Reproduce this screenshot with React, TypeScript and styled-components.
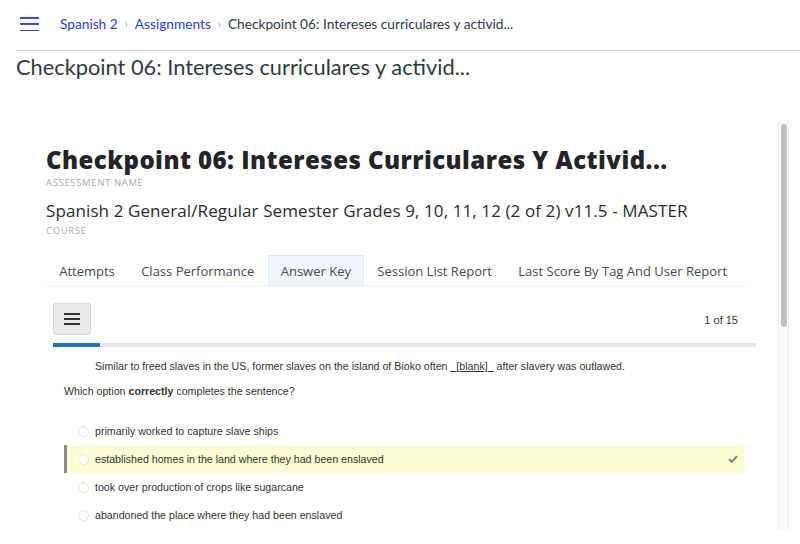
import React from "react";
import styled, { createGlobalStyle } from "styled-components";

const Global = createGlobalStyle`
  html, body { margin: 0; padding: 0; background: #fff; }
  body { font-family: Lato, "Noto Sans", sans-serif; color: #2d3b45; overflow: hidden; }
  * { box-sizing: border-box; }
`;

const Page = styled.div`
  width: 800px;
  height: 544px;
  overflow: hidden;
`;

const Header = styled.header`
  height: 50px;
  display: flex;
  align-items: center;
  padding-left: 20px;
  gap: 21px;
`;

const MenuButton = styled.button`
  border: 0;
  background: none;
  padding: 0;
  width: 19px;
  height: 14px;
  display: flex;
  flex-direction: column;
  justify-content: space-between;
  margin-top: -2px;
`;

const MenuLine = styled.span`
  display: block;
  height: 1.5px;
  width: 19px;
  background: #3b4bd6;
`;

const Crumbs = styled.nav`
  display: flex;
  align-items: center;
  font-size: 13.7px;
  margin-top: -3px;
`;

const CrumbLink = styled.a`
  color: #2b3fd0;
  text-decoration: none;
`;

const CrumbSep = styled.span`
  color: #8b969e;
  font-size: 11px;
  margin: 0 7px;
`;

const CrumbCurrent = styled.span`
  color: #2d3b45;
`;

const Divider = styled.hr`
  margin: 0 0 0 16px;
  border: 0;
  border-top: 1px solid #c7cdd1;
`;

const PageTitle = styled.h1`
  margin: 0;
  padding: 1px 0 0 16px;
  font-size: 21.8px;
  font-weight: 400;
  line-height: 30px;
  color: #2d3b45;
`;

const Frame = styled.div`
  margin: 40px 0 0 16px;
  width: 773px;
  height: 408px;
  display: flex;
  overflow: hidden;
`;

const FrameContent = styled.div`
  flex: 1;
  padding: 24px 0 0 30px;
`;

const ScrollTrack = styled.div`
  width: 11px;
  height: 408px;
  background: #fafafa;
  border-left: 1px solid #efefef;
  border-right: 1px solid #efefef;
  padding: 2px 0 0 2px;
`;

const ScrollThumb = styled.div`
  width: 6px;
  height: 203px;
  border-radius: 3px;
  background: #c1c1c1;
`;

const AssessmentTitle = styled.h2`
  margin: 0;
  font-family: "Open Sans", sans-serif;
  font-weight: 800;
  font-size: 24px;
  line-height: 28px;
  letter-spacing: 0.45px;
  color: #222427;
`;

const FieldLabel = styled.div`
  margin-top: 3px;
  font-family: "Open Sans", sans-serif;
  font-size: 9.5px;
  line-height: 11px;
  color: #a9abae;
  letter-spacing: 0.65px;
  text-transform: uppercase;
`;

const CourseName = styled.div`
  margin-top: 12px;
  font-family: "Open Sans", sans-serif;
  font-size: 17px;
  line-height: 22px;
  letter-spacing: 0.1px;
  color: #2a2c2f;
`;

const Tabs = styled.div`
  margin-top: 19px;
  width: 701px;
  height: 32px;
  display: flex;
  border-bottom: 1px solid #f2f3f5;
`;

const Tab = styled.div<{ $active?: boolean }>`
  height: 31px;
  padding: 0 12.2px;
  display: flex;
  align-items: center;
  font-family: "Open Sans", sans-serif;
  font-size: 13px;
  color: #454a50;
  background: ${(p) => (p.$active ? "#f0f5fc" : "transparent")};
  border: 1px solid ${(p) => (p.$active ? "#e2e8f0" : "transparent")};
  border-bottom: 0;
`;

const Quiz = styled.div`
  margin: 16px 0 0 7px;
  width: 703px;
  font-family: "Liberation Sans", Arial, sans-serif;
  font-size: 10.65px;
  color: #333;
`;

const QuizBar = styled.div`
  height: 32px;
  display: flex;
  align-items: center;
  justify-content: space-between;
  padding-right: 18px;
`;

const ListButton = styled.button`
  width: 38px;
  height: 32px;
  border: 1px solid #d9d9d9;
  border-radius: 2px;
  background: #e9e9e9;
  display: flex;
  flex-direction: column;
  align-items: center;
  justify-content: center;
  gap: 3px;
  padding: 0;
`;

const ListLine = styled.span`
  display: block;
  width: 16px;
  height: 2px;
  background: #333;
`;

const Counter = styled.span`
  font-size: 11px;
  color: #333;
  margin-top: 1px;
`;

const Progress = styled.div`
  margin-top: 8px;
  height: 4px;
  background: #e6e6e6;
`;

const ProgressFill = styled.div`
  height: 4px;
  background: #1f74b8;
`;

const Stem = styled.p`
  margin: 12px 0 0 42px;
  line-height: 14px;
`;

const Blank = styled.span`
  text-decoration: underline;
  text-underline-offset: 1px;
`;

const Prompt = styled.p`
  margin: 11px 0 0 11px;
  line-height: 14px;
`;

const Options = styled.div`
  margin: 19px 0 0 11px;
  width: 680px;
  display: flex;
  flex-direction: column;
`;

const Option = styled.div<{ $correct?: boolean }>`
  height: 28px;
  display: flex;
  align-items: center;
  padding: 0 6px 0 11px;
  gap: 6px;
  background: ${(p) => (p.$correct ? "#fafdd3" : "transparent")};
  border-left: 3px solid ${(p) => (p.$correct ? "#8a8a8a" : "transparent")};
`;

const Radio = styled.span`
  width: 11px;
  height: 11px;
  border-radius: 50%;
  border: 1px solid #e2e2e2;
  background: #fff;
  flex: none;
`;

const OptionText = styled.span`
  flex: 1;
  color: #333;
`;

const Check = () => (
  <svg width="10" height="8" viewBox="0 0 10 8">
    <path d="M1 4.2 L3.8 6.8 L9 1.2" fill="none" stroke="#777" strokeWidth="1.8" />
  </svg>
);

const options = [
  { text: "primarily worked to capture slave ships", correct: false },
  { text: "established homes in the land where they had been enslaved", correct: true },
  { text: "took over production of crops like sugarcane", correct: false },
  { text: "abandoned the place where they had been enslaved", correct: false },
];

const tabs = ["Attempts", "Class Performance", "Answer Key", "Session List Report", "Last Score By Tag And User Report"];

export default function App() {
  const current = 1;
  const total = 15;
  return (
    <Page>
      <Global />
      <Header>
        <MenuButton aria-label="menu">
          <MenuLine />
          <MenuLine />
          <MenuLine />
        </MenuButton>
        <Crumbs>
          <CrumbLink href="#">Spanish 2</CrumbLink>
          <CrumbSep>›</CrumbSep>
          <CrumbLink href="#">Assignments</CrumbLink>
          <CrumbSep>›</CrumbSep>
          <CrumbCurrent>Checkpoint 06: Intereses curriculares y activid...</CrumbCurrent>
        </Crumbs>
      </Header>
      <Divider />
      <PageTitle>Checkpoint 06: Intereses curriculares y activid...</PageTitle>
      <Frame>
        <FrameContent>
          <AssessmentTitle>Checkpoint 06: Intereses Curriculares Y Activid...</AssessmentTitle>
          <FieldLabel>Assessment Name</FieldLabel>
          <CourseName>Spanish 2 General/Regular Semester Grades 9, 10, 11, 12 (2 of 2) v11.5 - MASTER</CourseName>
          <FieldLabel>Course</FieldLabel>
          <Tabs>
            {tabs.map((t) => (
              <Tab key={t} $active={t === "Answer Key"}>
                {t}
              </Tab>
            ))}
          </Tabs>
          <Quiz>
            <QuizBar>
              <ListButton aria-label="questions">
                <ListLine />
                <ListLine />
                <ListLine />
              </ListButton>
              <Counter>
                {current} of {total}
              </Counter>
            </QuizBar>
            <Progress>
              <ProgressFill style={{ width: `${(current / total) * 100}%` }} />
            </Progress>
            <Stem>
              Similar to freed slaves in the US, former slaves on the island of Bioko often <Blank>_[blank]_</Blank> after
              slavery was outlawed.
            </Stem>
            <Prompt>
              Which option <b>correctly</b> completes the sentence?
            </Prompt>
            <Options>
              {options.map((o) => (
                <Option key={o.text} $correct={o.correct}>
                  <Radio />
                  <OptionText>{o.text}</OptionText>
                  {o.correct && <Check />}
                </Option>
              ))}
            </Options>
          </Quiz>
        </FrameContent>
        <ScrollTrack>
          <ScrollThumb />
        </ScrollTrack>
      </Frame>
    </Page>
  );
}
